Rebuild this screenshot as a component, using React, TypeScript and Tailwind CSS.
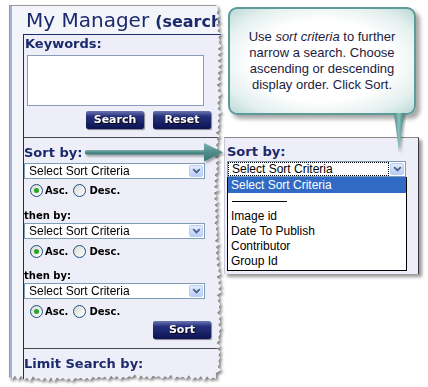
import React from "react";

const V = { fontFamily: '"DejaVu Sans", Verdana, sans-serif' };
const A = { fontFamily: '"Liberation Sans", Arial, sans-serif' };

function tornPath(w: number, h: number): string {
  const pts: string[] = [];
  const rx = (i: number) => Math.sin(i * 12.9898) * 43758.5453 - Math.floor(Math.sin(i * 12.9898) * 43758.5453);
  pts.push("0px 0px");
  const base = w - 5;
  pts.push(`${base}px 0px`);
  let i = 1;
  for (let y = 2; y < h - 6; y += 3) {
    const x = base + (i % 2 === 0 ? 2 : -1) + rx(i) * 2.5 + Math.sin(y / 40) * 1.5;
    pts.push(`${x.toFixed(1)}px ${y}px`);
    i++;
  }
  for (let x = base; x > 0; x -= 3) {
    const y = h - 5 + (i % 2 === 0 ? 2 : -1) + rx(i) * 2.5 + Math.sin(x / 30) * 1.2;
    pts.push(`${x}px ${y.toFixed(1)}px`);
    i++;
  }
  pts.push(`0px ${h - 4}px`);
  return `polygon(${pts.join(",")})`;
}

function Chevron() {
  return (
    <svg width="9" height="6" viewBox="0 0 9 6">
      <path d="M1.2 1.2 L4.5 4.4 L7.8 1.2" fill="none" stroke="#4d6185" strokeWidth="1.8" />
    </svg>
  );
}

function DropBtn() {
  return (
    <div className="my-[1px] mr-[1px] flex w-[14px] items-center justify-center rounded-[2px] border border-[#b9cdf5] bg-[linear-gradient(to_bottom,#e3ecfe,#b9cdf8)]">
      <Chevron />
    </div>
  );
}

function Select({ wide, focused }: { wide: string; focused?: boolean }) {
  return (
    <div className={`flex h-[16px] border border-[#7f9db9] bg-white ${wide}`} style={A}>
      <div className="flex flex-1 items-center pl-[1px]">
        <span
          className={`flex h-[12px] flex-1 items-center pl-[3px] text-[12px] leading-[12px] text-black ${
            focused ? "mr-[2px] outline outline-1 outline-dotted outline-black" : ""
          }`}
        >
          Select Sort Criteria
        </span>
      </div>
      <DropBtn />
    </div>
  );
}

function Radio({ checked }: { checked?: boolean }) {
  return (
    <span className="flex h-[13px] w-[13px] items-center justify-center rounded-full border border-[#1c5180] bg-[linear-gradient(135deg,#d8d8d2,#ffffff)]">
      {checked && <span className="h-[5px] w-[5px] rounded-full bg-[#28a428]" />}
    </span>
  );
}

function RadioRow() {
  return (
    <div className="flex h-[14px] items-center pl-[6px] text-[10px] font-bold text-black" style={V}>
      <Radio checked />
      <span className="ml-[2px]">Asc.</span>
      <span className="ml-[5px]">
        <Radio />
      </span>
      <span className="ml-[3px]">Desc.</span>
    </div>
  );
}

function Btn({ children, cls }: { children: React.ReactNode; cls?: string }) {
  return (
    <div
      className={`flex h-[18px] w-[58px] items-center justify-center rounded-[2px] bg-[linear-gradient(to_bottom,#6a78b0_0%,#26307c_30%,#0d1352_100%)] text-[11px] font-bold text-white shadow-[1px_1px_1px_rgba(0,0,0,0.45)] [text-shadow:1px_1px_0_#000] ${cls ?? ""}`}
      style={V}
    >
      {children}
    </div>
  );
}

export default function App() {
  const clip = tornPath(212, 376);
  return (
    <div className="relative h-[387px] w-[428px] overflow-hidden bg-white">
      {/* Left screenshot piece */}
      <div className="absolute left-[9px] top-[5px] h-[376px] w-[212px] [filter:drop-shadow(2px_2px_1.5px_rgba(0,0,0,0.5))]">
        <div className="flex h-full w-full border-l border-t border-[#9a9a9a] bg-[#f4f4fb]" style={{ clipPath: clip }}>
          <div className="w-[2px] bg-[#a9b0d6]" />
          <div className="flex flex-1 flex-col overflow-hidden" style={V}>
            <div className="ml-[14px] h-[24px] whitespace-nowrap pt-[2px] leading-[24px] text-[#1b2a6b]">
              <span className="text-[20px]">My Manager</span>
              <span className="ml-[6px] text-[16px] font-bold">(search</span>
            </div>
            <div className="ml-[11px] mt-[4px] flex w-[260px] flex-1 flex-col border-l border-t border-[#1b2a6b] bg-[#eeeef9]">
              <div className="pl-[1px] pt-[1px] text-[13px] font-bold leading-[16px] text-[#1b2a6b]">Keywords:</div>
              <div className="ml-[3px] mt-[3px] h-[51px] w-[177px] border border-[#8a9db8] bg-white" />
              <div className="ml-[62px] mt-[5px] flex gap-[9px]">
                <Btn>Search</Btn>
                <Btn>Reset</Btn>
              </div>
              <div className="mt-[8px] h-[1px] bg-[#4a4a4a]" />
              <div className="mt-[7px] text-[13px] font-bold leading-[16px] text-[#1b2a6b]">Sort by:</div>
              <div className="mt-[2px]">
                <Select wide="w-[181px]" />
              </div>
              <div className="mt-[4px]">
                <RadioRow />
              </div>
              <div className="mt-[13px] text-[10px] font-bold leading-[12px] text-black">then by:</div>
              <div className="mt-[1px]">
                <Select wide="w-[181px]" />
              </div>
              <div className="mt-[5px]">
                <RadioRow />
              </div>
              <div className="mt-[12px] text-[10px] font-bold leading-[12px] text-black">then by:</div>
              <div className="mt-[1px]">
                <Select wide="w-[181px]" />
              </div>
              <div className="mt-[5px]">
                <RadioRow />
              </div>
              <div className="ml-[129px] mt-[3px]">
                <Btn>Sort</Btn>
              </div>
              <div className="mt-[9px] h-[1px] bg-[#4a4a4a]" />
              <div className="mt-[7px] text-[13px] font-bold leading-[16px] text-[#1b2a6b]">Limit Search by:</div>
            </div>
          </div>
        </div>
      </div>

      {/* Right screenshot piece */}
      <div
        className="absolute left-[224px] top-[137px] flex h-[137px] w-[195px] flex-col border-l border-r border-t border-l-[#c8c8d8] border-r-[#3a3a3a] border-t-[#8a8a8a] bg-[#eeeef9] pl-[2px] shadow-[3px_3px_3px_rgba(0,0,0,0.4)]"
        style={V}
      >
        <div className="mt-[6px] text-[13px] font-bold leading-[16px] text-[#1b2a6b]">Sort by:</div>
        <div className="mt-[1px]">
          <Select wide="w-[179px]" focused />
        </div>
        <div className="h-[94px] w-[180px] overflow-hidden border-b border-l border-r border-black bg-white text-[12px] leading-[15px] text-black" style={A}>
          <div className="h-[16px] bg-[#316ac5] pl-[3px] pt-[1px] text-white">Select Sort Criteria</div>
          <div className="h-[15px] pl-[4px] pt-[8px]">
            <div className="h-[1px] w-[55px] bg-black" />
          </div>
          <div className="h-[15px] pl-[3px] pt-[1px]">Image id</div>
          <div className="h-[15px] pl-[3px] pt-[1px]">Date To Publish</div>
          <div className="h-[15px] pl-[3px] pt-[1px]">Contributor</div>
          <div className="h-[15px] pl-[3px] pt-[1px]">Group Id</div>
        </div>
      </div>

      {/* Callout */}
      <div
        className="absolute left-[228px] top-[7px] flex h-[108px] w-[188px] items-center justify-center rounded-[9px] border-2 border-[#5c9b98] bg-[radial-gradient(ellipse_at_center,#ffffff_55%,#e3f0ee_80%,#bcd9d5_100%)] text-center text-[13px] leading-[16px] text-[#1c1c40] shadow-[4px_4px_4px_rgba(0,0,0,0.35)]"
        style={A}
      >
        <div>
          Use <i>sort criteria</i> to further
          <br />
          narrow a search. Choose
          <br />
          ascending or descending
          <br />
          display order. Click Sort.
        </div>
      </div>
      <svg className="absolute left-0 top-0" width="428" height="387" viewBox="0 0 428 387">
        <defs>
          <linearGradient id="tail" x1="0" x2="1" y1="0" y2="0">
            <stop offset="0" stopColor="#4b8d8a" />
            <stop offset="0.5" stopColor="#8cc0bc" />
            <stop offset="1" stopColor="#3f817e" />
          </linearGradient>
          <linearGradient id="shaft" x1="0" x2="0" y1="0" y2="1">
            <stop offset="0" stopColor="#7fb3b0" />
            <stop offset="0.5" stopColor="#4e8c89" />
            <stop offset="1" stopColor="#3a7673" />
          </linearGradient>
          <filter id="sh" x="-10%" y="-50%" width="130%" height="250%">
            <feDropShadow dx="1.5" dy="2" stdDeviation="1" floodColor="#000" floodOpacity="0.35" />
          </filter>
        </defs>
        <polygon points="394,113 404,113 399,152" fill="url(#tail)" filter="url(#sh)" />
        <g filter="url(#sh)">
          <rect x="85" y="150" width="121" height="4.5" rx="1.5" fill="url(#shaft)" />
          <polygon points="204,143 223,152.2 204,161.5" fill="url(#shaft)" />
        </g>
      </svg>
    </div>
  );
}
